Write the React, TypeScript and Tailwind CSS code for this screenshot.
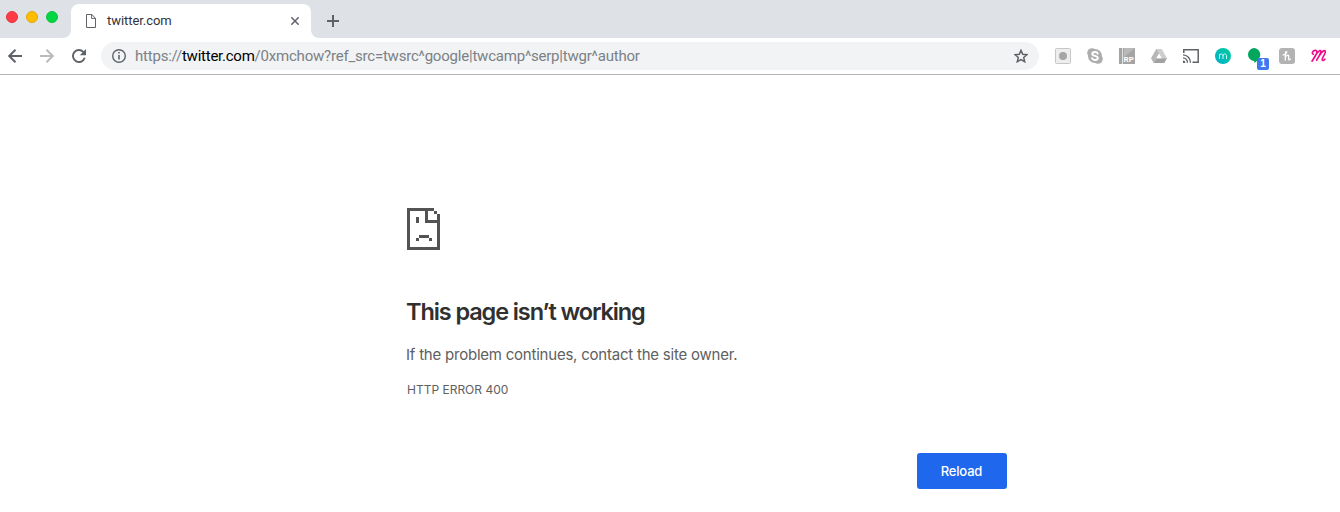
import React from "react";

const Traffic = () => (
  <div className="flex h-[34px] w-[71px] shrink-0 items-center gap-2 pl-1.5">
    <span className="size-3 rounded-full border border-[#e2343f] bg-[#ff3b47]" />
    <span className="size-3 rounded-full border border-[#e5a50a] bg-[#ffbd00]" />
    <span className="size-3 rounded-full border border-[#0fc03c] bg-[#00d742]" />
  </div>
);

const TabStrip = () => (
  <div className="flex h-[38px] items-start bg-[#dee1e6]">
    <Traffic />
    <div className="relative mt-1 flex h-[34px] w-[240px] items-center rounded-t-lg bg-white">
      <svg className="absolute bottom-0 -left-2" width="8" height="8"><path d="M8 0v8H0a8 8 0 0 0 8-8z" fill="#fff" /></svg>
      <svg className="absolute -right-2 bottom-0" width="8" height="8"><path d="M0 0v8h8a8 8 0 0 1-8-8z" fill="#fff" /></svg>
      <svg className="ml-[15px]" width="10" height="14" viewBox="0 0 10 14" fill="none" stroke="#5f6368">
        <path d="M.5.5h5.300l3.700 3.700v9.300h-9zM5.600.5v3.900h3.900" />
      </svg>
      <span className="ml-[11px] font-['Roboto','Inter',sans-serif] text-[13px] leading-4 tracking-[-0.06px] text-[#303338]">twitter.com</span>
      <svg className="ml-auto mr-3" width="8" height="8" viewBox="0 0 8 8" stroke="#5f6368" strokeWidth="1.5"><path d="M.3.3l7.4 7.4M7.7.3.3 7.7" /></svg>
    </div>
    <svg className="mt-[15px] ml-4" width="12" height="12" viewBox="0 0 12 12" stroke="#5f6368" strokeWidth="2"><path d="M0 6h12M6 0v12" /></svg>
  </div>
);

const Extensions = () => (
  <div className="ml-4 flex items-center gap-4">
    <svg width="16" height="16" viewBox="0 0 16 16"><rect x=".5" y=".5" width="15" height="15" rx="1" fill="#ededed" stroke="#c6c6c6" /><circle cx="8" cy="8" r="4" fill="#a5a5a5" /></svg>
    <svg width="16" height="16" viewBox="0 0 16 16">
      <circle cx="5" cy="5" r="4.8" fill="#adadad" /><circle cx="11" cy="11" r="4.8" fill="#adadad" /><circle cx="8" cy="8" r="7" fill="#adadad" />
      <path d="M10.800 5.600C10.300 4.400 9.200 4 8 4c-1.700 0-2.700.7-2.700 1.900 0 2.600 5.500 1.400 5.500 4.100 0 1.300-1.200 2-2.800 2-1.500 0-2.600-.6-3-1.800" fill="none" stroke="#fff" strokeWidth="1.900" strokeLinecap="round" />
    </svg>
    <svg width="16" height="16" viewBox="0 0 16 16">
      <path d="M0 0h16v16H0z" fill="#a4a4a4" /><path d="M5 0h11L5 9z" fill="#b9b9b9" /><path d="M3.500 0v16" stroke="#e2e2e2" strokeWidth="1" />
      <text x="4.600" y="14.300" fill="#fff" fontFamily="Roboto, sans-serif" fontWeight="700" fontSize="8">RP</text>
    </svg>
    <svg width="16" height="16" viewBox="0 0 16 16"><path d="M5.300 1h5.400l-8 14L0 10.300z" fill="#b6b6b6" /><path d="M5.300 1h5.400L16 10.300h-5.400z" fill="#cecece" /><path d="M5.400 10.300H16L13.300 15H2.700z" fill="#a2a2a2" /><path d="M8 5.800l2.600 4.500H5.400z" fill="#fff" /></svg>
    <svg width="16" height="14" viewBox="0 0 16 14" fill="none" stroke="#5f6368" strokeWidth="1.500">
      <path d="M.8 4V.8h14.400v12.400H9.500" /><path d="M0 5.900a7.400 7.400 0 0 1 7.400 7.800M0 8.900a4.400 4.400 0 0 1 4.400 4.800" strokeWidth="1.300" /><path d="M0 11.600A2.200 2.200 0 0 1 2.200 14H0z" fill="#5f6368" stroke="none" />
    </svg>
    <svg width="16" height="16" viewBox="0 0 16 16">
      <defs><linearGradient id="teal" x1="0" y1="1" x2="1" y2="0"><stop stopColor="#00b1c9" /><stop offset="1" stopColor="#00cc9e" /></linearGradient></defs>
      <circle cx="8" cy="8" r="8" fill="url(#teal)" /><path d="M4.500 11V6M4.500 7.700c0-2.300 3.500-2.300 3.500 0V11M8 7.700c0-2.300 3.500-2.300 3.500 0V11" fill="none" stroke="#d6faf5" />
    </svg>
    <div className="relative size-4">
      <svg width="16" height="16" viewBox="0 0 16 16"><path d="M6.700 0a6.600 6.600 0 0 1 6.600 6.600c0 3.700-3.300 6.900-6 8.400v-2.100h-.6A6.500 6.500 0 0 1 6.700 0z" fill="#00a75d" /></svg>
      <span className="absolute top-[10px] left-[10px] flex h-3 w-3 items-center justify-center rounded-[2px] bg-[#4078f2] font-['Liberation_Sans',sans-serif] text-[10px] leading-3 font-bold text-white">1</span>
    </div>
    <svg width="16" height="16" viewBox="0 0 16 16"><rect width="16" height="16" rx="3" fill="#b3b3b3" /><path d="M4.200 6.800C6 6.500 7.900 5.100 7.700 3.900 7.100 2.800 6.400 4.400 6.300 6v6M6.300 9.300c.8-2 3.300-2.900 3.500-1.300.1 1.300-.9 2.800.1 3.700.6.300 1.200-.2 1.500-.7" fill="none" stroke="#fff" strokeWidth="1.300" strokeLinecap="round" /></svg>
    <svg width="16" height="14" viewBox="0 0 16 14" fill="none" stroke="#ef0b89" strokeWidth="1.600" strokeLinecap="round" strokeLinejoin="round">
      <path d="M2.300 5.300C.4 4.700 1.600 1.500 4.300 1.400c2.500-.1 1.600 3-.1 5.900L1 12.200C3.800 7.400 6.600 1.800 9 1.600c1.900-.1.500 2.900-.7 5L5.600 11.300C8.300 6.700 10.800 1.700 13.300 1.600c1.900 0 .7 2.900-.6 5.200-1 1.900-2.300 4.300-.9 4.700.8.100 1.600-.6 2.100-1.300" />
    </svg>
  </div>
);

const Toolbar = () => (
  <div className="flex h-[37px] items-center border-b border-[#b5b5b5] pl-2">
    <svg width="14" height="14" viewBox="0 0 14 14" fill="none" stroke="#5f6368" strokeWidth="2"><path d="M14 7H1.500M7.500.7 1.200 7l6.300 6.300" /></svg>
    <svg className="ml-[18px]" width="14" height="14" viewBox="0 0 14 14" fill="none" stroke="#b9bbbd" strokeWidth="2"><path d="M0 7h12.500M6.500.7 12.800 7l-6.300 6.300" /></svg>
    <svg className="ml-[18px]" width="14" height="14" viewBox="0 0 14 14" fill="none" stroke="#5f6368" strokeWidth="1.900"><path d="M12.700 8.800A6 6 0 1 1 11.300 2.800l1.300 1.400" /><path d="M14 0v6.200H7.800z" fill="#5f6368" stroke="none" /></svg>
    <div className="ml-[15px] flex h-7 w-[938px] items-center rounded-full bg-[#f1f3f4] pr-[11px] pl-[11px]">
      <svg width="14" height="14" viewBox="0 0 14 14" fill="none" stroke="#5f6368" strokeWidth="1.400"><circle cx="7" cy="7" r="6.300" /><path d="M7 3v1.600M7 6v4.600" strokeWidth="1.600" /></svg>
      <span className="ml-[9px] font-['Roboto','Inter',sans-serif] text-[15px] leading-5 tracking-[-0.21px] whitespace-nowrap text-[#7b8186]">https://<span className="tracking-[-0.24px] text-black">twitter.com</span>/0xmchow?ref_src=twsrc^google|twcamp^serp|twgr^author</span>
      <svg className="ml-auto" width="14" height="14" viewBox="0 0 14 14" fill="none" stroke="#5f6368" strokeWidth="1.500"><path d="M7 1.300l1.700 4 4.300.4-3.300 2.800 1 4.200L7 10.500l-3.700 2.200 1-4.200L1 5.700l4.300-.4z" /></svg>
    </div>
    <Extensions />
  </div>
);

export default function App() {
  return (
    <div className="flex h-[512px] w-[1340px] flex-col overflow-hidden bg-white">
      <TabStrip />
      <Toolbar />
      <main className="ml-[407px] flex w-[600px] flex-col items-start pt-[133px] font-['Inter',sans-serif] text-[#606060]">
        <svg width="33" height="42" viewBox="0 0 33 42" fill="#535353" shapeRendering="crispEdges">
          <path d="M0 0h27v3h-6v9h12v30H0zM3 3v36h27V15H18V3z" fillRule="evenodd" />
          <path d="M27 3h3v3h-3zM30 6h3v9h-3zM9 9h3v6H9zM12 27h10v3H12zM9 30h3v3H9zM22 30h3v3h-3z" />
        </svg>
        <h1 className="mt-[47px] -ml-px text-[23.5px] leading-[29px] font-[560] tracking-[-1.1px] text-[#303030]">This page isn’t working</h1>
        <p className="mt-[20px] -ml-px text-[15px] leading-[18px] tracking-[-0.22px]">If the problem continues, contact the site owner.</p>
        <p className="mt-[18px] text-[12px] leading-[15px]">HTTP ERROR 400</p>
        <button className="mt-[56px] flex h-9 w-[90px] items-center justify-center self-end rounded-[3px] bg-[#1f67ed] pt-px pr-px text-[13px] font-medium tracking-[-0.2px] text-white">Reload</button>
      </main>
    </div>
  );
}
